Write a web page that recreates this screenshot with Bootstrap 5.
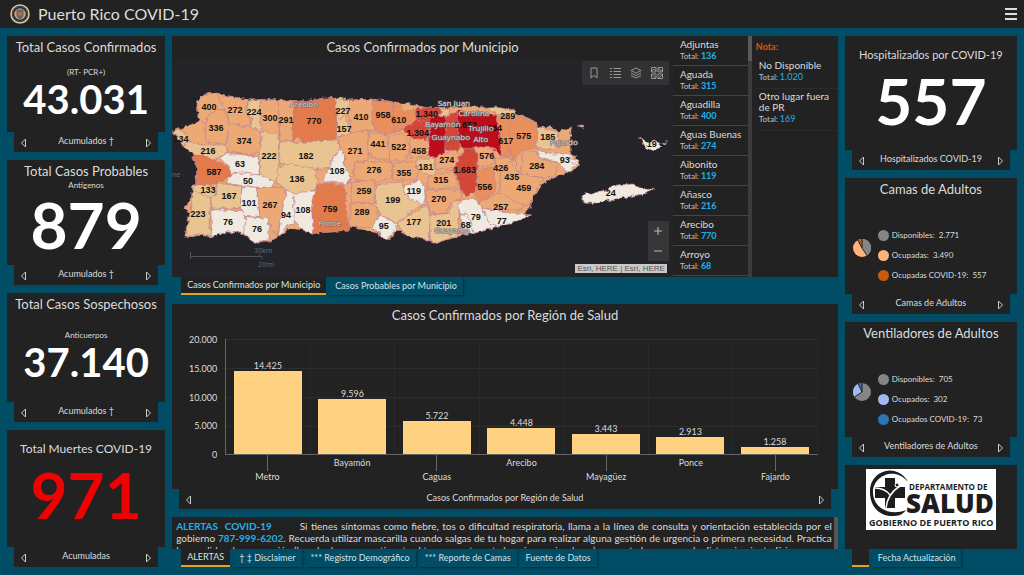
<!DOCTYPE html>
<html lang="es">
<head>
<meta charset="utf-8">
<meta name="viewport" content="width=device-width, initial-scale=1">
<title>Puerto Rico COVID-19</title>
<link href="https://cdn.jsdelivr.net/npm/bootstrap@5.3.0/dist/css/bootstrap.min.css" rel="stylesheet">
<style>
  :root { --sea: #014d65; --panel: #222; --ink: #dcdcdc; --sky: #1fb1e8; --gold: #e0a526; }
  body { font-family: Lato, "Open Sans", sans-serif; background: var(--sea); color: var(--ink); font-size: 10px; line-height: 12px; }
  button { font: inherit; color: inherit; background: none; border: 0; padding: 0; }
  h1 { font-size: 16px; line-height: 28px; font-weight: 400; }
  h2 { font-size: 13px; line-height: 16px; font-weight: 400; margin: 0; text-align: center; white-space: nowrap; }
  h2.t12 { font-size: 12px; }
  h2.t11 { font-size: 11px; }
  .topbar { background: var(--panel); height: 28px; padding: 0 7px 0 10px; }
  .board { display: grid; grid-template-columns: 158fr 665fr 172fr; gap: 7px; padding: 8px 7px; flex: 1 0 auto; }
  .stack { display: flex; flex-direction: column; gap: 8px; min-width: 0; }
  .widget { display: flex; flex-direction: column; }
  .pane { background: var(--panel); flex: 1 0 auto; }
  .pager { background: var(--panel); margin: 0 7px; height: 20px; padding: 0 6px; font-size: 9px; line-height: 18px; }
  .pager svg { width: 7px; height: 10px; display: block; margin-top: 2px; fill: none; stroke: #ccc; }
  .kpi { text-align: center; }
  .h-a { flex: 1 0 116px; } .h-b { flex: 1 0 125px; } .h-c { flex: 1 0 129px; } .h-d { flex: 1 0 137px; }
  .h-e { flex: 1 0 134px; } .h-f { flex: 1 0 136px; } .h-g { flex: 1 0 135px; } .h-h { flex: 1 0 102px; }
  .head-3 { padding-top: 3px; } .head-11 { padding-top: 11px; }
  .sub { font-size: 8px; }
  .h-a .sub { margin-top: 11px; } .h-c .sub { margin-top: 17px; }
  .fig { font-weight: 700; color: #fff; font-size: 40px; line-height: 42px; }
  .fig-lg { font-size: 64px; line-height: 68px; }
  .red { color: #ee0202; }
  .tabs { margin: 0 9px; height: 18px; gap: 3px; font-size: 9px; line-height: 16px; }
  .tabs-map { margin-bottom: 1px; }
  .tabs-side { margin: 0 7px; }
  .tabs button { padding: 0 6px; white-space: nowrap; box-shadow: 1px 1px 2px #00303f; height: 18px; color: #d3e2e7; }
  .tabs button.on { background: var(--panel); border-bottom: 2px solid var(--gold); box-shadow: none; }
  .tabs button.blank { width: 17px; }
  .mapview { background: #242328; position: relative; flex: 1 0 218px; }
  .mapview > svg { display: block; width: 100%; height: 218px; }
  .tools { position: absolute; top: 2px; right: 4px; background: #323234; gap: 9px; padding: 0 6px; height: 24px; }
  .tools svg { width: 12px; height: 12px; display: block; fill: none; stroke: #999; stroke-width: 1; }
  .zoombox { position: absolute; right: 4px; bottom: 16px; width: 21px; background: #363636; }
  .zoombox button { height: 20px; width: 21px; display: block; }
  .zoombox svg { width: 10px; height: 10px; stroke: #bbb; display: block; margin: auto; }
  .credit { position: absolute; right: 6px; bottom: 4px; background: #c9c9c9; color: #555; font: 8px/9px "Liberation Sans", sans-serif; padding: 0 2px; }
  .places { width: 79px; padding-right: 4px; background: linear-gradient(#5a5a5a 25px, #3c3c3c 0) right / 4px 100% no-repeat; }
  .places li { height: 30px; border-bottom: 1px solid #444; padding: 3px 0 0 7px; line-height: 11px; }
  .tot { font-size: 8px; color: #c4c4c4; display: block; }
  .tot b { font-size: 9px; color: var(--sky); }
  .note { width: 86px; padding-left: 4px; }
  .note h3 { font-size: 9px; line-height: 12px; color: #e35205; font-weight: 700; margin: 5px 0; }
  .note li { border-bottom: 1px solid #2b2b2b; padding: 2px 6px 5px 3px; line-height: 11px; }
  .chart { padding: 0 20px 0 0; grid-template-columns: 53px 1fr; margin-top: 16px; }
  .scale { height: 116px; text-align: right; padding-right: 8px; font-size: 9px; }
  .scale span { height: 1px; line-height: 1px; }
  .plot { height: 116px; border-left: 1px solid #666; border-bottom: 1px solid #666; background: linear-gradient(#2d2d2d 1px, transparent 1px) 0 0 / 100% 29px; }
  .slot { flex: 1 0 0; border-right: 1px solid #292929; font-size: 9px; line-height: 11px; text-align: center; }
  .bar { background: #ffd282; width: 68px; }
  .names { font-size: 9px; text-align: center; grid-column: 2; height: 34px; }
  .names span { flex: 1 0 0; padding-top: 2px; }
  .names .low::before { content: ""; display: block; height: 16px; width: 1px; margin: -2px auto 0; background: #666; }
  .alert-text { height: 32px; overflow: hidden; background: var(--panel); border-right: 4px solid #555; padding: 3px 2px 0 4px; }
  .alert-text .full { display: block; text-align-last: justify; white-space: nowrap; }
  .alert-text b { color: var(--sky); }
  .h-f h2, .h-g h2 { padding: 3px 0 32px; }
  .legend { gap: 8px; line-height: 12px; font-size: 8px; white-space: nowrap; }
  .legend i { width: 11px; height: 11px; border-radius: 50%; margin-right: 3px; display: inline-block; }
  .gray { background: #858585; } .peach { background: #ffb27c; } .rust { background: #c85a0c; } .lilac { background: #9fb9f3; } .blue { background: #2e75b6; }
  .pie { width: 18px; height: 18px; margin-bottom: 14px; }
  .rings { padding-left: 8px; gap: 7px; }
</style>
</head>
<body class="d-flex flex-column min-vh-100">
<header class="topbar d-flex align-items-center justify-content-between">
  <div class="d-flex align-items-center">
    <svg width="20" height="20" viewBox="0 0 20 20" class="me-2"><circle cx="10" cy="10" r="9" fill="#27233a" stroke="#d8c79c" stroke-width="1.6"/><circle cx="10" cy="10" r="7.4" fill="none" stroke="#8d7c60" stroke-dasharray="1 1"/><circle cx="10" cy="10" r="5.8" fill="#c2a56a"/><path d="M6.5 5.5h7v6q-1 3-3.500 4-2.500-1-3.500-4z" fill="#596b72"/><path d="M8 8h4v3.500H8z" fill="#b46c4a"/></svg>
    <h1 class="m-0">Puerto Rico COVID-19</h1>
  </div>
  <button aria-label="Menú"><svg width="12" height="12" viewBox="0 0 12 12" class="d-block" stroke="#ddd" stroke-width="2"><path d="M0 1h12M0 6h12M0 11h12"/></svg></button>
</header>

<main class="board">
  <div class="stack">
    <section class="widget kpi h-a">
      <div class="pane head-3"><h2>Total Casos Confirmados</h2><div class="sub">(RT- PCR+)</div><div class="fig">43.031</div></div>
      <div class="pager d-flex justify-content-between"><button aria-label="Anterior"><svg viewBox="0 0 7 10"><path d="M5.500 1v8L1.500 5z"/></svg></button><span>Acumulados †</span><button aria-label="Siguiente"><svg viewBox="0 0 7 10"><path d="M1.500 1v8L5.500 5z"/></svg></button></div>
    </section>
    <section class="widget kpi h-b">
      <div class="pane head-3"><h2>Total Casos Probables</h2><div class="sub">Antígenos</div><div class="fig fig-lg">879</div></div>
      <div class="pager d-flex justify-content-between"><button aria-label="Anterior"><svg viewBox="0 0 7 10"><path d="M5.500 1v8L1.500 5z"/></svg></button><span>Acumulados †</span><button aria-label="Siguiente"><svg viewBox="0 0 7 10"><path d="M1.500 1v8L5.500 5z"/></svg></button></div>
    </section>
    <section class="widget kpi h-c">
      <div class="pane head-3"><h2>Total Casos Sospechosos</h2><div class="sub">Anticuerpos</div><div class="fig">37.140</div></div>
      <div class="pager d-flex justify-content-between"><button aria-label="Anterior"><svg viewBox="0 0 7 10"><path d="M5.500 1v8L1.500 5z"/></svg></button><span>Acumulados †</span><button aria-label="Siguiente"><svg viewBox="0 0 7 10"><path d="M1.500 1v8L5.500 5z"/></svg></button></div>
    </section>
    <section class="widget kpi h-d">
      <div class="pane head-11"><h2 class="t12">Total Muertes COVID-19</h2><div class="fig fig-lg red mt-1">971</div></div>
      <div class="pager d-flex justify-content-between"><button aria-label="Anterior"><svg viewBox="0 0 7 10"><path d="M5.500 1v8L1.500 5z"/></svg></button><span>Acumuladas</span><button aria-label="Siguiente"><svg viewBox="0 0 7 10"><path d="M1.500 1v8L5.500 5z"/></svg></button></div>
    </section>
  </div>

  <div class="stack">
    <section class="widget">
      <div class="pane d-flex">
        <div class="d-flex flex-column flex-grow-1">
          <h2 class="head-3 pb-1">Casos Confirmados por Municipio</h2>
          <div class="mapview">
            <svg viewBox="172 59 501 218" aria-label="Mapa de Puerto Rico">
              <defs><filter id="coast" x="-5%" y="-5%" width="110%" height="110%" color-interpolation-filters="sRGB"><feTurbulence type="fractalNoise" baseFrequency=".2" numOctaves="2" seed="4"/><feDisplacementMap in="SourceGraphic" scale="5" xChannelSelector="R" yChannelSelector="G"/></filter></defs>
              <g id="island" filter="url(#coast)" stroke="#bb8390" stroke-width=".7" stroke-linejoin="round"></g>
              <g fill="none" stroke="#55555a"><path d="M190.500 252v7M190 256.500h69.500v-2m0 2h2.500v3"/></g>
              <g id="counts" font-family="Liberation Sans, Arial, sans-serif" font-weight="700" font-size="9" text-anchor="middle" fill="#111"></g>
              <g id="cities" font-family="Noto Sans, sans-serif" font-size="8" text-anchor="middle" fill="#d3cfcf" stroke="#6d6566" stroke-width="1" paint-order="stroke"></g>
              <g font-family="Noto Sans, sans-serif" font-size="7" fill="#66666a"><text x="254" y="253">30km</text><text x="258" y="267">20mi</text><text x="172" y="177">ne</text></g>
            </svg>
            <div class="tools d-flex align-items-center">
              <button aria-label="Marcadores"><svg viewBox="0 0 12 12"><path d="M3 1h6v10L6 8.500 3 11z"/></svg></button>
              <button aria-label="Leyenda"><svg viewBox="0 0 12 12"><path d="M4.500 1.500H12m-7.500 3H12m-7.500 3H12m-7.500 3H12M1 1.500h2m-2 3h2m-2 3h2m-2 3h2"/></svg></button>
              <button aria-label="Capas"><svg viewBox="0 0 12 12"><path d="M6 1l5 2.500L6 6 1 3.500zM1 6l5 2.500L11 6M1 8.500L6 11l5-2.500"/></svg></button>
              <button aria-label="Mapas base"><svg viewBox="0 0 12 12"><path d="M.5.500h4.500v4.500H.500zM7 .500h4.500v4.500H7zM.500 7h4.500v4.500H.500zM7 7h4.500v4.500H7zM1 4l2-2 2 2M7 2l4 2M2 8l2 3M8 11l3-3"/></svg></button>
            </div>
            <div class="zoombox"><button aria-label="Acercar"><svg viewBox="0 0 10 10"><path d="M5 1v8M1 5h8"/></svg></button><button aria-label="Alejar"><svg viewBox="0 0 10 10"><path d="M1 5h8"/></svg></button></div>
            <div class="credit">Esri, HERE | Esri, HERE</div>
          </div>
        </div>
        <ul class="places list-unstyled m-0">
          <li>Adjuntas<span class="tot">Total: <b>136</b></span></li>
          <li>Aguada<span class="tot">Total: <b>315</b></span></li>
          <li>Aguadilla<span class="tot">Total: <b>400</b></span></li>
          <li>Aguas Buenas<span class="tot">Total: <b>274</b></span></li>
          <li>Aibonito<span class="tot">Total: <b>119</b></span></li>
          <li>Añasco<span class="tot">Total: <b>216</b></span></li>
          <li>Arecibo<span class="tot">Total: <b>770</b></span></li>
          <li>Arroyo<span class="tot">Total: <b>68</b></span></li>
        </ul>
        <div class="note"><h3>Nota:</h3>
          <ul class="list-unstyled m-0"><li>No Disponible<span class="tot">Total: <b class="fw-normal">1.020</b></span></li><li>Otro lugar fuera<br>de PR<span class="tot">Total: <b class="fw-normal">169</b></span></li></ul>
        </div>
      </div>
      <nav class="tabs tabs-map d-flex"><button class="on">Casos Confirmados por Municipio</button><button>Casos Probables por Municipio</button></nav>
    </section>

    <section class="widget flex-grow-1">
      <div class="pane">
        <h2 class="head-3">Casos Confirmados por Región de Salud</h2>
        <div class="chart d-grid">
          <div class="scale d-flex flex-column justify-content-between"><span>20.000</span><span>15.000</span><span>10.000</span><span>5.000</span><span>0</span></div>
          <div class="plot d-flex" id="plot"></div>
          <div class="names d-flex"><span class="low">Metro</span><span>Bayamón</span><span class="low">Caguas</span><span>Arecibo</span><span class="low">Mayagüez</span><span>Ponce</span><span class="low">Fajardo</span></div>
        </div>
      </div>
      <div class="pager d-flex justify-content-between"><button aria-label="Anterior"><svg viewBox="0 0 7 10"><path d="M5.500 1v8L1.500 5z"/></svg></button><span>Casos Confirmados por Región de Salud</span><button aria-label="Siguiente"><svg viewBox="0 0 7 10"><path d="M1.500 1v8L5.500 5z"/></svg></button></div>
    </section>

    <section class="widget">
      <div class="alert-text"><span class="full"><b>ALERTAS&nbsp; COVID-19</b>&nbsp; &nbsp; &nbsp; &nbsp; Si tienes síntomas como fiebre, tos o dificultad respiratoria, llama a la línea de consulta y orientación establecida por el</span><span class="full">gobierno <b>787-999-6202</b>. Recuerda utilizar mascarilla cuando salgas de tu hogar para realizar alguna gestión de urgencia o primera necesidad. Practica</span>las medidas de prevención (lavado de manos, etiqueta al toser y no tocarte los ojos, nariz y boca) y respete las normas de distanciamiento físico.</div>
      <nav class="tabs d-flex"><button class="on">ALERTAS</button><button>† ‡ Disclaimer</button><button>*** Registro Demográfico</button><button>*** Reporte de Camas</button><button>Fuente de Datos</button></nav>
    </section>
  </div>

  <div class="stack">
    <section class="widget kpi h-e">
      <div class="pane head-11"><h2 class="t11">Hospitalizados por COVID-19</h2><div class="fig fig-lg mt-1">557</div></div>
      <div class="pager d-flex justify-content-between"><button aria-label="Anterior"><svg viewBox="0 0 7 10"><path d="M5.500 1v8L1.500 5z"/></svg></button><span>Hospitalizados COVID-19</span><button aria-label="Siguiente"><svg viewBox="0 0 7 10"><path d="M1.500 1v8L5.500 5z"/></svg></button></div>
    </section>
    <section class="widget h-f">
      <div class="pane"><h2>Camas de Adultos</h2>
        <div class="rings d-flex align-items-center"><svg class="pie" viewBox="-9 -9 18 18"><circle r="9" fill="#ffb27c"/><path d="M0 0V-9A9 9 0 0 1 5 7.500z" fill="#858585"/><path d="M0 0L-4.300-7.900A9 9 0 0 1 0-9z" fill="#c85a0c"/><path d="M5 7.500L0 0V-9M0 0L-4.300-7.900" stroke="#222" fill="none"/></svg>
          <div class="legend d-flex flex-column"><div class="d-flex align-items-center"><i class="gray"></i>Disponibles:&nbsp; 2.771</div><div class="d-flex align-items-center"><i class="peach"></i>Ocupadas:&nbsp; 3.490</div><div class="d-flex align-items-center"><i class="rust"></i>Ocupadas COVID-19:&nbsp; 557</div></div></div>
      </div>
      <div class="pager d-flex justify-content-between"><button aria-label="Anterior"><svg viewBox="0 0 7 10"><path d="M5.500 1v8L1.500 5z"/></svg></button><span>Camas de Adultos</span><button aria-label="Siguiente"><svg viewBox="0 0 7 10"><path d="M1.500 1v8L5.500 5z"/></svg></button></div>
    </section>
    <section class="widget h-g">
      <div class="pane"><h2>Ventiladores de Adultos</h2>
        <div class="rings d-flex align-items-center"><svg class="pie" viewBox="-9 -9 18 18"><circle r="9" fill="#858585"/><path d="M0 0L-7.500 5A9 9 0 0 1-3.800-8.200z" fill="#9fb9f3"/><path d="M0 0L-3.800-8.200A9 9 0 0 1 0-9z" fill="#2e75b6"/><path d="M-7.500 5L0 0V-9M0 0L-3.800-8.200" stroke="#222" fill="none"/></svg>
          <div class="legend d-flex flex-column"><div class="d-flex align-items-center"><i class="gray"></i>Disponibles:&nbsp; 705</div><div class="d-flex align-items-center"><i class="lilac"></i>Ocupados:&nbsp; 302</div><div class="d-flex align-items-center"><i class="blue"></i>Ocupados COVID-19:&nbsp; 73</div></div></div>
      </div>
      <div class="pager d-flex justify-content-between"><button aria-label="Anterior"><svg viewBox="0 0 7 10"><path d="M5.500 1v8L1.500 5z"/></svg></button><span>Ventiladores de Adultos</span><button aria-label="Siguiente"><svg viewBox="0 0 7 10"><path d="M1.500 1v8L5.500 5z"/></svg></button></div>
    </section>
    <section class="widget h-h">
      <div class="pane pt-1 text-center">
        <svg width="130" height="61" viewBox="0 0 130 61"><path fill="#fff" d="M0 0h130v61H0z"/><g fill="#1d1d1f"><path d="M42 13A20 20 0 0 0 4 23c0 16 11 25 24 24 6 0 10-3 12-6-14 6-32 0-33-17C6 8 28-4 42 13z"/><path d="M19 9h10v9h10v11H29v10H19V29H9V18h10z"/></g><path d="M20 39c1-10 6-17 14-22M9 19c7 0 12 3 15 7" fill="none" stroke="#fff" stroke-width="1.500"/><circle cx="31" cy="16" r="2" fill="#1d1d1f" stroke="#fff"/><g font-family="Open Sans, sans-serif" font-weight="700" fill="#1d1d1f"><text x="43" y="21" font-size="8">DEPARTAMENTO DE</text><text x="40" y="44" font-size="26" font-weight="800">SALUD</text><text x="3" y="57" font-size="9">GOBIERNO DE PUERTO RICO</text></g></svg>
      </div>
      <nav class="tabs tabs-side d-flex"><button class="on blank" aria-label="Logo"></button><button>Fecha Actualización</button></nav>
    </section>
  </div>
</main>

<script src="https://cdn.jsdelivr.net/npm/bootstrap@5.3.0/dist/js/bootstrap.bundle.min.js"></script>
<script>
const NS = 'http://www.w3.org/2000/svg';
function add(parent, tag, attrs, text) {
  const el = document.createElementNS(NS, tag);
  for (const k in attrs) el.setAttribute(k, attrs[k]);
  if (text) el.textContent = text;
  parent.appendChild(el);
  return el;
}
// Fill classes, from fewest to most cases
const shade = { a: '#efe9df', b: '#e9c390', c: '#eca976', d: '#e98f5e', e: '#e27a4b', f: '#d44638', g: '#bd0c1a' };
// Polygons in thirds of a map unit: west, centre and east sheets, each with its own origin
const sheets = [
 [170, 80, [
  ['c','8,152 50,140 92,120 80,90 82,65 105,42 140,40 180,50 235,60 300,58 370,65 430,60 500,55 540,60 610,58 670,65 720,72 780,85 840,80 940,80 990,90 1030,100 1090,120 1105,142 1140,140 1170,155 1205,140 1200,180 1202,220 1225,240 1230,258 1190,280 1155,290 1120,310 1090,350 1075,390 1045,420 990,440 940,450 910,460 880,465 830,480 800,490 760,475 720,470 680,450 660,480 620,460 540,440 500,455 430,460 400,450 360,445 325,470 300,485 255,490 215,460 170,455 125,470 75,465 45,470 50,440 60,400 45,385 65,350 68,320 80,310 75,290 85,270 70,240 85,228 70,210 40,195 10,160'],
  ['c','105,42 140,40 165,90 140,90 115,105 108,130 92,125 80,90 82,65'],
  ['c','140,40 235,60 230,90 240,110 240,140 175,130 165,90'],
  ['b','235,60 272,60 270,110 275,155 240,140 245,120 232,95'],
  ['c','272,60 325,60 328,155 325,175 290,155 272,155'],
  ['c','325,60 370,65 372,180 330,185'],
  ['e','370,65 430,60 498,55 500,175 470,185 440,180 400,190 385,172 368,182'],
  ['b','498,55 540,60 540,90 525,105 500,120'],
  ['c','540,60 610,58 612,150 545,160 540,120 530,100'],
  ['b','500,120 525,105 545,160 500,172'],
  ['c','140,88 165,92 178,130 168,195 140,190 108,185 105,140 115,108'],
  ['b','8,152 35,150 60,185 40,195'],
  ['c','178,130 240,140 275,155 270,215 245,225 168,215 168,195'],
  ['b','35,195 60,188 100,195 168,195 172,220 150,230 130,240 100,228 70,225'],
  ['b','275,155 325,160 328,250 322,310 300,300 270,285 268,215'],
  ['b','328,185 372,185 400,190 440,182 505,180 512,210 490,230 480,265 430,270 350,250 328,250'],
  ['a','150,235 165,222 200,222 265,230 268,285 220,280 185,280 175,258'],
  ['a','170,300 190,280 230,280 270,285 315,305 305,325 250,322 170,310'],
  ['e','65,228 95,225 130,240 160,250 188,285 165,300 120,315 75,315 85,270 70,240'],
  ['b','322,270 350,250 430,265 445,300 435,330 385,345 340,325 322,305'],
  ['a','512,210 525,230 522,260 540,290 535,318 500,305 455,310 480,260 490,230'],
  ['c','505,172 560,155 595,150 595,240 555,250 550,290 540,290 522,260 525,230 512,210'],
  ['b','80,315 125,318 140,340 120,355 85,345 68,330'],
  ['b','140,308 215,320 215,385 125,388 122,355 140,340'],
  ['b','68,330 122,355 118,430 125,470 85,462 45,470 60,400'],
  ['a','215,320 260,322 270,410 215,405'],
  ['c','260,322 322,322 340,325 350,350 335,400 320,470 300,430 270,410'],
  ['a','122,388 160,390 215,392 230,420 220,460 170,455 125,470'],
  ['a','230,410 295,415 298,480 255,490 220,460'],
  ['a','350,330 372,340 372,400 385,425 360,432 325,470 335,400'],
  ['a','372,340 435,332 430,460 400,450 372,420'],
  ['e','440,315 480,310 525,318 530,400 540,450 430,460 425,380']]],
 [350, 80, [
  ['d','68,60 130,65 135,150 110,165 75,150 65,120'],
  ['d','130,65 155,72 160,100 200,85 200,120 190,145 150,150 132,160'],
  ['c','60,155 115,165 120,240 65,235 50,200'], ['c','115,170 160,160 180,200 170,245 120,240'],
  ['c','180,170 240,180 240,225 180,235'], ['c','15,245 125,245 130,290 70,310 15,300'],
  ['c','130,250 200,245 200,300 130,300'], ['b','200,240 250,235 258,290 205,275'],
  ['f','195,85 270,82 275,105 240,120 240,140 200,130'],
  ['f','160,150 200,120 235,125 240,165 230,180 190,175'],
  ['g','240,115 290,105 290,160 285,210 285,230 235,230 238,180'],
  ['f','288,105 322,95 335,170 325,215 285,210'],
  ['b','265,105 280,88 300,88 297,108'],
  ['g','322,90 360,95 440,105 455,170 455,230 430,205 380,200 370,215 335,205 325,170'],
  ['b','400,82 430,80 495,90 500,105 490,115 450,105'],
  ['d','442,110 480,118 500,120 495,200 475,235 455,230 450,170'],
  ['c','265,225 320,210 335,225 310,265 260,270 255,240'],
  ['c','235,290 310,270 325,320 235,330'],
  ['c','375,200 430,205 435,250 385,265'],
  ['f','345,205 372,205 385,230 380,330 350,350 335,330 310,270 325,240'],
  ['c','435,235 500,235 500,260 475,300 440,270'],
  ['d','385,270 430,260 440,330 390,375 375,350'],
  ['c','5,305 75,300 75,370 5,370'], ['c','0,370 75,370 85,410 70,440 0,440'],
  ['b','80,315 160,305 165,345 230,370 200,385 140,430 90,405 75,370'],
  ['a','160,320 190,308 205,298 225,320 225,375 195,365 165,345'],
  ['c','225,330 335,330 340,355 300,370 290,400 240,400 235,370'],
  ['b','140,430 230,375 240,400 240,480 170,470'],
  ['a','65,440 90,405 140,430 135,455 110,480'],
  ['b','240,405 300,400 305,370 330,360 325,465 260,490 240,480'],
  ['a','325,370 350,355 380,360 400,400 430,415 450,440 370,460 345,400 330,400'],
  ['a','330,405 355,405 370,460 335,460'],
  ['c','385,370 440,340 510,345 520,390 400,388'],
  ['a','395,385 500,400 545,405 500,425 450,440 420,430']]],
 [500, 30, [
  ['d','30,265 60,260 110,280 115,355 70,360 40,390 25,350'],
  ['b','110,290 175,305 170,350 160,360 112,355'],
  ['c','70,365 110,365 120,385 175,400 165,440 130,445 60,430'],
  ['c','0,435 30,390 60,430 130,445 100,500 80,530 0,490'],
  ['a','110,360 160,372 205,370 235,400 200,430 180,400 120,380'],
  ['a','245,500 260,490 310,485 350,465 400,462 440,478 465,478 440,490 390,500 330,510 280,520 255,520'],
  ['a','420,320 440,335 465,330 485,350 460,365 435,348'],
  ['a','485,340 503,335 496,345'], ['a','234,288 252,285 250,292'], ['a','205,385 238,392 228,406'],
  ['e','-456,452 -446,448 -452,458 -460,462']]]
];
const island = document.getElementById('island');
for (const [ox, oy, list] of sheets)
  for (const [k, pts] of list)
    add(island, 'polygon', { fill: shade[k], points: pts.split(' ').map(p => { const [x, y] = p.split(',').map(Number); return (ox + x / 3).toFixed(1) + ',' + (oy + y / 3).toFixed(1); }).join(' ') });

// Case counts: label, x, y
const counts = '400,209,110 272,235,113 224,254,115 300,270,121 291,286,123 770,314,124 227,343,114 410,361,120 157,344,132 958,383,118 610,399,123 1.340,427,117 1.652,466,128 1.834,491,131 289,508,119 336,216,131 134,181,142 374,244,144 216,208,154 222,269,159 182,306,159 271,355,154 441,378,147 522,399,150 1.304,418,136 458,419,154 617,506,144 575,524,139 185,548,140 587,214,175 63,240,167 50,248,184 136,297,182 108,337,174 276,374,173 355,404,176 181,426,170 274,447,163 576,487,159 1.683,465,173 426,501,171 284,537,169 93,565,163 133,208,193 167,229,199 101,249,206 267,270,208 94,286,218 108,303,213 759,330,212 259,364,194 289,362,215 199,393,203 119,414,194 315,441,183 270,439,202 556,485,190 435,512,180 459,524,191 257,501,210 223,198,217 76,228,225 76,257,232 95,384,229 177,414,225 201,444,226 68,466,228 79,476,220 77,502,224 24,611,196 19,652,147';
const cg = document.getElementById('counts');
for (const c of counts.split(' ')) { const [t, x, y] = c.split(','); add(cg, 'text', { x, y }, t); }
const cities = [['Arecibo',304,107],['San Juan',454,106],['Carolina',474,116],['Bayamón',443,127],['Trujillo',481,131],['Guaynabo',451,140],['Alto',481,142],['Fajardo',564,145],['Ponce',330,226],['Guayama',452,233]];
const tg = document.getElementById('cities');
for (const [t, x, y] of cities) add(tg, 'text', { x, y }, t);

// Bars by health region, full scale 20,000
const plot = document.getElementById('plot');
for (const v of [14425, 9596, 5722, 4448, 3443, 2913, 1258]) {
  const slot = document.createElement('div');
  slot.className = 'slot d-flex flex-column justify-content-end align-items-center';
  slot.innerHTML = `<span>${Math.floor(v / 1000)}.${String(v % 1000).padStart(3, '0')}</span><div class="bar" style="height:${v / 200}%"></div>`;
  plot.appendChild(slot);
}
</script>
</body>
</html>
